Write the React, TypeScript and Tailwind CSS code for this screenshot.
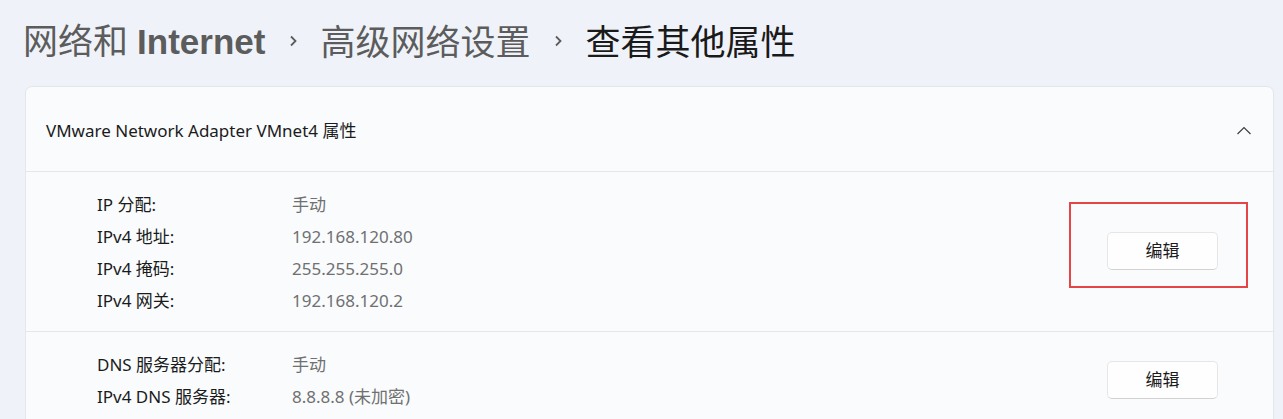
import React from 'react';

const FONT = { fontFamily: '"Noto Sans", "Noto Sans CJK SC", sans-serif' };

const ChevronUp: React.FC = () => (
    <svg width="16" height="16" viewBox="0 0 16 16" fill="none">
        <path d="M1.5 11 L8 4.5 L14.5 11" stroke="#3f3f3f" strokeWidth="1.2" />
    </svg>
);

const Crumb: React.FC = () => (
    <svg width="10" height="12" viewBox="0 0 10 12" fill="none" className="ml-[23px] mr-[22px]">
        <path d="M3 1.5 L7.5 6 L3 10.5" stroke="#5c5c5c" strokeWidth="1.8" />
    </svg>
);

const Row: React.FC<{ label: string; value: string }> = ({ label, value }) => (
    <div className="flex h-[32px] items-center">
        <div className="w-[195px] text-[#1b1b1b]">{label}</div>
        <div className="text-[#707070]">{value}</div>
    </div>
);

const EditButton: React.FC<{ marked?: boolean }> = ({ marked }) => (
    <div className="relative">
        <button className="h-[38px] w-[111px] rounded-[5px] border border-[#e6e6e6] border-b-[#d2d2d2] bg-[#fefefe] text-[17px] text-[#1b1b1b]">
            编辑
        </button>
        {marked && <div className="pointer-events-none absolute -bottom-[18px] -left-[38px] -right-[30px] -top-[30px] border-[2.5px] border-[#e64545]" />}
    </div>
);

export default function App() {
    return (
        <div className="h-[419px] w-[1283px] overflow-hidden bg-[#eff3f9] pl-[25px] pr-[9px]" style={FONT}>
            <div className="flex h-[82px] items-center text-[35px] leading-none">
                <span className="-ml-[2px] text-[#5c5c5c]">
                    网络和 <span className="font-semibold" style={{ fontFamily: '"Liberation Sans", sans-serif' }}>Internet</span>
                </span>
                <Crumb />
                <span className="text-[#5c5c5c]">高级网络设置</span>
                <Crumb />
                <span className="text-[#1a1a1a]">查看其他属性</span>
            </div>

            <div className="mt-[4px] rounded-[7px] border border-[#e3e7ed] bg-[#f9fbfd] text-[17px]">
                <div className="flex h-[84px] items-center justify-between pl-[20px] pr-[21px] pt-[3px]">
                    <span className="text-[#1b1b1b]">VMware Network Adapter VMnet4 属性</span>
                    <ChevronUp />
                </div>

                <div className="flex items-center justify-between border-t border-[#e5e7ea] pb-[14px] pl-[71px] pr-[55px] pt-[17px]">
                    <div>
                        <Row label="IP 分配:" value="手动" />
                        <Row label="IPv4 地址:" value="192.168.120.80" />
                        <Row label="IPv4 掩码:" value="255.255.255.0" />
                        <Row label="IPv4 网关:" value="192.168.120.2" />
                    </div>
                    <div className="mb-[5px]">
                        <EditButton marked />
                    </div>
                </div>

                <div className="flex items-center justify-between border-t border-[#e5e7ea] pb-[14px] pl-[71px] pr-[55px] pt-[17px]">
                    <div>
                        <Row label="DNS 服务器分配:" value="手动" />
                        <Row label="IPv4 DNS 服务器:" value="8.8.8.8 (未加密)" />
                    </div>
                    <div className="mt-[-3px]">
                        <EditButton />
                    </div>
                </div>
            </div>
        </div>
    );
}
